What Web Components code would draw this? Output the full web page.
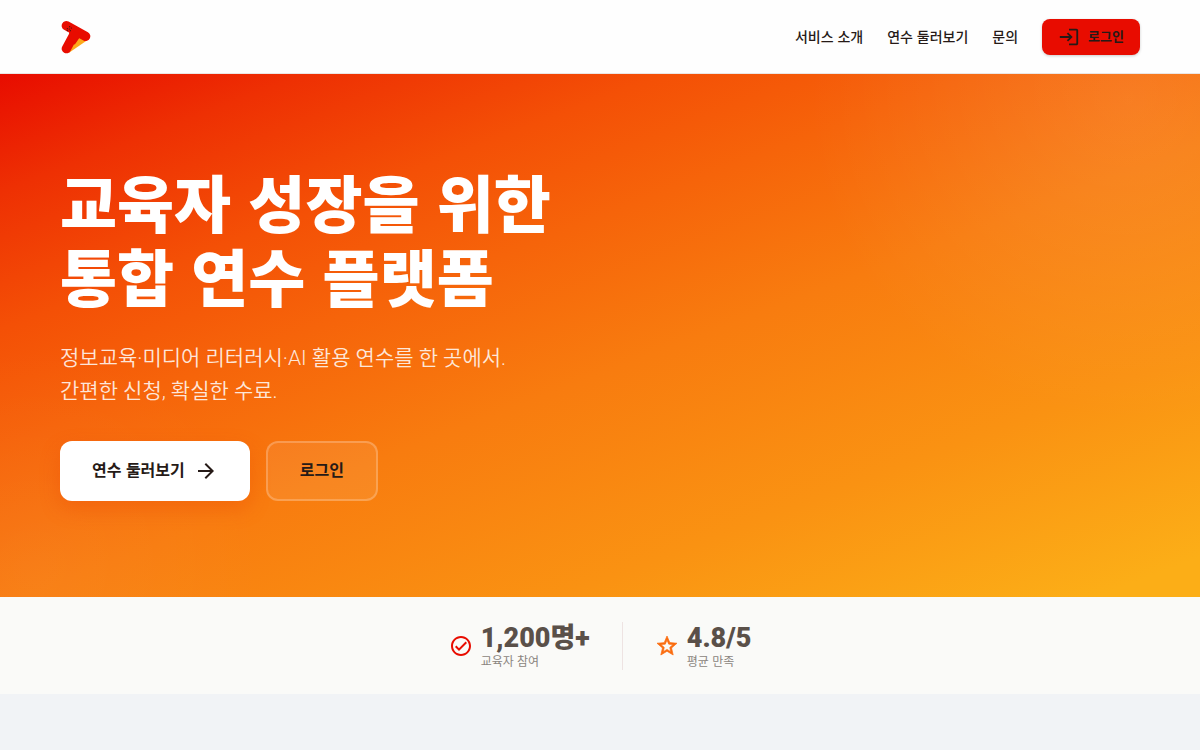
<!DOCTYPE html>
<html lang="ko">
<head>
<meta charset="utf-8">
<meta name="viewport" content="width=device-width, initial-scale=1">
<title>교육자 연수 플랫폼</title>
<style>
  body {
    margin: 0;
    min-height: 100vh;
    background: #f1f3f6;
    color: #261a17;
    font-family: "Liberation Sans", "Noto Sans CJK KR", sans-serif;
    --gutter: 60px;
    --red: #e80c00;
    --orange: #fa6c0f;
  }
</style>
</head>
<body>
<site-header>
  <nav-link href="#about">서비스 소개</nav-link>
  <nav-link href="#courses">연수 둘러보기</nav-link>
  <nav-link href="#contact">문의</nav-link>
  <action-button slot="action" variant="login"><ui-icon slot="before" name="login"></ui-icon>로그인</action-button>
</site-header>
<main>
  <hero-banner>
    <span slot="title">교육자 성장을 위한<br>통합 연수 플랫폼</span>
    <span slot="lead">정보교육·미디어 리터러시·AI 활용 연수를 한 곳에서.<br>간편한 신청, 확실한 수료.</span>
    <action-button slot="actions" variant="solid">연수 둘러보기<ui-icon slot="after" name="arrow"></ui-icon></action-button>
    <action-button slot="actions" variant="glass">로그인</action-button>
  </hero-banner>
  <stats-bar>
    <stat-item label="교육자 참여"><ui-icon slot="icon" name="check"></ui-icon>1,200명+</stat-item>
    <stat-item label="평균 만족"><ui-icon slot="icon" name="star"></ui-icon>4.8/5</stat-item>
  </stats-bar>
</main>
<script>
  const define = (name, html, setup) => {
    const template = document.createElement('template');
    template.innerHTML = html;
    customElements.define(name, class extends HTMLElement {
      connectedCallback() {
        if (this.shadowRoot) return;
        this.attachShadow({ mode: 'open' }).append(template.content.cloneNode(true));
        if (setup) setup(this, this.shadowRoot);
      }
    });
  };

  const icons = {
    login: 'M11 7 9.6 8.4l2.6 2.6H2v2h10.2l-2.6 2.6L11 17l5-5-5-5zm9 12h-8v2h8c1.1 0 2-.9 2-2V5c0-1.1-.9-2-2-2h-8v2h8v14z',
    arrow: 'm12 4-1.41 1.41L16.17 11H4v2h12.17l-5.58 5.59L12 20l8-8z',
    check: 'M12 2C6.48 2 2 6.48 2 12s4.48 10 10 10 10-4.48 10-10S17.52 2 12 2zm0 18c-4.41 0-8-3.59-8-8s3.59-8 8-8 8 3.59 8 8-3.59 8-8 8zm4.59-12.42L10 14.17l-2.59-2.58L6 13l4 4 8-8z',
    star: 'm22 9.24-7.19-.62L12 2 9.19 8.63 2 9.24l5.46 4.73L5.82 21 12 17.27 18.18 21l-1.63-7.03L22 9.24zM12 15.4l-3.76 2.27 1-4.28-3.32-2.88 4.38-.38L12 6.1l1.71 4.04 4.38.38-3.32 2.88 1 4.28L12 15.4z'
  };

  define('ui-icon', `
    <style>
      :host { display: block; flex: none; width: 24px; height: 24px; }
      :host([name="check"]) { color: var(--red); }
      :host([name="star"]) { color: var(--orange); }
      :host([name="star"]) path { stroke: currentColor; stroke-width: .7; }
      svg { display: block; width: 100%; height: 100%; fill: currentColor; }
    </style>
    <svg viewBox="0 0 24 24" aria-hidden="true"><path/></svg>
  `, (host, root) => root.querySelector('path').setAttribute('d', icons[host.getAttribute('name')]));

  define('brand-logo', `
    <style>
      :host { display: block; }
      a { display: block; }
      svg { display: block; width: 32px; height: 34px; }
    </style>
    <a href="#" aria-label="홈">
      <svg viewBox="0 0 96 102" aria-hidden="true">
        <path d="M54 44 86 58 26 99z" fill="#fda91b"/>
        <path d="M19 17 77 49M44 40 19 86" fill="none" stroke="#e80c00" stroke-width="28" stroke-linecap="round"/>
        <path d="M26 26 70 46 58 54 44 74 30 56z" fill="#e80c00"/>
        <g fill="#231815"><circle cx="22" cy="26" r="1.7"/><circle cx="29" cy="20" r="1.7"/><circle cx="34" cy="24" r="1.7"/><circle cx="28" cy="27" r="1.7"/><circle cx="22" cy="32" r="1.7"/><circle cx="31" cy="32" r="1.7"/></g>
      </svg>
    </a>
  `);

  define('nav-link', `
    <style>
      :host { display: block; }
      a { display: block; color: inherit; font-size: 14px; line-height: 20px; font-weight: 500; text-decoration: none; white-space: nowrap; }
    </style>
    <a><slot></slot></a>
  `, (host, root) => root.querySelector('a').setAttribute('href', host.getAttribute('href')));

  define('action-button', `
    <style>
      :host { display: block; }
      button {
        display: flex; align-items: center; justify-content: center;
        box-sizing: border-box; height: 60px; margin: 0; padding: 0 32px; gap: 9px;
        border: 0; border-radius: 12px; background: #fff; color: #261a17;
        font-family: inherit; font-size: 16px; line-height: 24px; font-weight: 700;
        white-space: nowrap; cursor: pointer;
      }
      :host([variant="solid"]) button { box-shadow: 0 8px 20px rgba(232, 60, 0, .28); }
      :host([variant="glass"]) button { border: 2px solid rgba(255, 255, 255, .22); background: rgba(255, 255, 255, .08); }
      :host([variant="login"]) button {
        height: 36px; padding: 0 16px; gap: 8px; border-radius: 8px; background: var(--red);
        font-size: 13px; line-height: 20px; box-shadow: 0 1px 3px rgba(0, 0, 0, .2);
      }
      :host([variant="login"]) ::slotted(ui-icon) { width: 22px; height: 22px; }
    </style>
    <button type="button"><slot name="before"></slot><slot></slot><slot name="after"></slot></button>
  `);

  define('site-header', `
    <style>
      :host { display: block; background: #fefefe; border-bottom: 1px solid #ebe6e4; }
      header { display: flex; align-items: center; justify-content: space-between; min-height: 73px; padding: 0 var(--gutter); }
      .right, nav { display: flex; align-items: center; gap: 24px; }
    </style>
    <header>
      <brand-logo></brand-logo>
      <div class="right"><nav aria-label="주 메뉴"><slot></slot></nav><slot name="action"></slot></div>
    </header>
  `);

  define('hero-banner', `
    <style>
      :host {
        display: block;
        background:
          radial-gradient(circle at 94% 5%, rgba(255, 255, 255, .09), transparent 26%),
          radial-gradient(circle at 3% 95%, rgba(255, 255, 255, .04), transparent 18%),
          linear-gradient(159deg, #e80c00 0%, #ee3003 12%, #f45006 26%, #f6640a 38%, #f87c0f 54%, #fa9212 75%, #fcae17 96%);
      }
      section { padding: 96px var(--gutter); }
      h1 { margin: 0 0 24px; color: #fff; font-size: 62px; line-height: 74px; font-weight: 900; }
      p { margin: 0 0 33px; color: rgba(255, 255, 255, .85); font-family: Roboto, "Noto Sans CJK KR", sans-serif; font-size: 21px; line-height: 33px; font-weight: 350; }
      .actions { display: flex; flex-wrap: wrap; gap: 16px; }
    </style>
    <section>
      <h1><slot name="title"></slot></h1>
      <p><slot name="lead"></slot></p>
      <div class="actions"><slot name="actions"></slot></div>
    </section>
  `);

  define('stats-bar', `
    <style>
      :host { display: flex; justify-content: center; padding: 25px 24px 24px; background: #fafaf8; }
      ::slotted(stat-item:not(:first-child)) { border-left: 1px solid #eee3e2; }
    </style>
    <slot></slot>
  `);

  define('stat-item', `
    <style>
      :host { display: flex; align-items: center; gap: 8px; padding: 0 32px; }
      .value { color: #5a5049; font-family: Roboto, "Noto Sans CJK KR", sans-serif; font-size: 27px; line-height: 32px; font-weight: 900; white-space: nowrap; }
      .label { color: #8b8580; font-size: 12px; line-height: 16px; white-space: nowrap; }
    </style>
    <slot name="icon"></slot>
    <div><div class="value"><slot></slot></div><div class="label"></div></div>
  `, (host, root) => {
    root.querySelector('.label').textContent = host.getAttribute('label');
  });
</script>
</body>
</html>
